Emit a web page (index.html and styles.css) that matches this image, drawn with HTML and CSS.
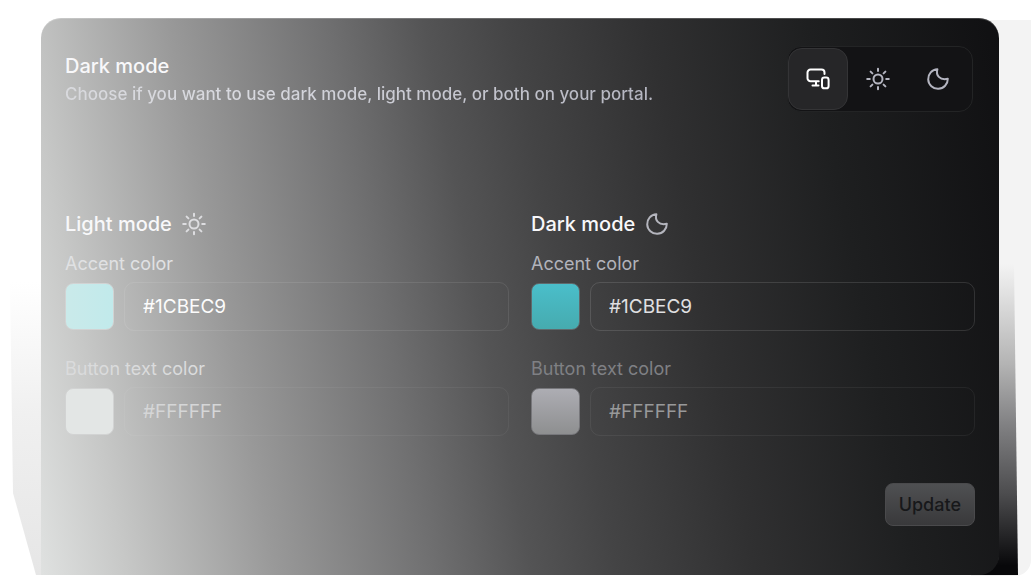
FILE: index.html
```html
<!DOCTYPE html>
<html lang="en">
<head>
    <meta charset="UTF-8">
    <meta name="viewport" content="width=device-width, initial-scale=1.0">
    <title>Portal appearance</title>

    <link rel="stylesheet" href="styles.css">
</head>
<body>

<svg class="sprite" aria-hidden="true">
    <symbol id="icon-sun" viewBox="0 0 24 24">
        <circle cx="12" cy="12" r="4.5"/>
        <path d="M12 1.7v2.2M12 20.1v2.2M1.2 12h2.6M20.2 12h2.6M4.6 4.6l1.8 1.8M17.6 17.6l1.8 1.8M4.6 19.4l1.8-1.8M17.6 6.4l1.8-1.8"/>
    </symbol>
    <symbol id="icon-moon" viewBox="0 0 24 24">
        <path d="M11.4 2.2C9.6 8 13.6 13.6 21.8 11.8A9.8 9.8 0 1 1 11.4 2.2z"/>
    </symbol>
    <symbol id="icon-devices" viewBox="0 0 24 24">
        <path d="M18.5 7V5.6a3 3 0 0 0-3-3h-11a3 3 0 0 0-3 3v5.6a3 3 0 0 0 3 3h8.2M10 14.2v4M6.5 18.4h6"/>
        <rect x="16" y="10.5" width="6.6" height="10.8" rx="2.4"/>
    </symbol>
</svg>

<main class="stage">
    <form class="card">
        <header class="card-header">
            <div class="intro">
                <h1 class="title">Dark mode</h1>
                <p class="description">Choose if you want to use dark mode, light mode, or both on your portal.</p>
            </div>
            <div class="switch" role="group" aria-label="Portal mode">
                <button type="button" class="switch-btn active" aria-label="Both" aria-pressed="true">
                    <svg class="icon"><use href="#icon-devices"/></svg>
                </button>
                <button type="button" class="switch-btn" aria-label="Light" aria-pressed="false">
                    <svg class="icon"><use href="#icon-sun"/></svg>
                </button>
                <button type="button" class="switch-btn" aria-label="Dark" aria-pressed="false">
                    <svg class="icon"><use href="#icon-moon"/></svg>
                </button>
            </div>
        </header>

        <div class="modes">
            <section class="mode light">
                <h2 class="title">Light mode <svg class="icon"><use href="#icon-sun"/></svg></h2>
                <div class="field">
                    <label for="lightAccent">Accent color</label>
                    <div class="color-row">
                        <input type="color" class="swatch accent" value="#1cbec9" aria-label="Pick light accent color">
                        <input type="text" class="hex" id="lightAccent" value="#1CBEC9">
                    </div>
                </div>
                <div class="field faded">
                    <label for="lightText">Button text color</label>
                    <div class="color-row">
                        <input type="color" class="swatch" value="#ffffff" aria-label="Pick light button text color">
                        <input type="text" class="hex" id="lightText" value="#FFFFFF">
                    </div>
                </div>
            </section>

            <section class="mode dark">
                <h2 class="title">Dark mode <svg class="icon"><use href="#icon-moon"/></svg></h2>
                <div class="field">
                    <label for="darkAccent">Accent color</label>
                    <div class="color-row">
                        <input type="color" class="swatch accent" value="#1cbec9" aria-label="Pick dark accent color">
                        <input type="text" class="hex" id="darkAccent" value="#1CBEC9">
                    </div>
                </div>
                <div class="field faded">
                    <label for="darkText">Button text color</label>
                    <div class="color-row">
                        <input type="color" class="swatch" value="#ffffff" aria-label="Pick dark button text color">
                        <input type="text" class="hex" id="darkText" value="#FFFFFF">
                    </div>
                </div>
            </section>
        </div>

        <footer class="card-footer">
            <button type="submit" class="update">Update</button>
        </footer>
    </form>
</main>

</body>
</html>
```

FILE: styles.css
```css
* {
    box-sizing: border-box;
}

body {
    margin: 0;
    background-color: #ffffff;
    font-family: Inter, "Liberation Sans", sans-serif;
}

.sprite {
    display: none;
}

.icon {
    width: 24px;
    height: 24px;
    fill: none;
    stroke: currentColor;
    stroke-width: 2;
    stroke-linecap: round;
    stroke-linejoin: round;
}

.stage {
    position: relative;
    isolation: isolate;
    min-height: 100vh;
    padding: 18px 32px 1px 41px;
    display: flex;
}

/* grey panel behind the right edge */
.stage::before {
    content: "";
    position: absolute;
    z-index: -2;
    top: 20px;
    right: 0;
    bottom: 0;
    width: 60px;
    background-color: #f3f3f3;
    border-bottom-right-radius: 16px;
}

.card {
    position: relative;
    flex: 1;
    padding: 28px 24px 49px;
    border-radius: 20px 20px 20px 0;
    color: #f8f8fa;
    background: linear-gradient(79deg, #dfe1e0 0%, #c7c8c7 8%, #999999 22%, #6f6f70 37%, #545455 46%, #444445 54%, #303031 67%, #1e1f20 82%, #101012 100%);
    box-shadow: inset 0 1px rgba(255, 255, 255, 0.2);
}

/* slanted shadows on both sides */
.card::before,
.card::after {
    content: "";
    position: absolute;
    z-index: -1;
    bottom: 0;
}

.card::before {
    top: 264px;
    left: -31px;
    width: 60px;
    background: linear-gradient(#ffffff, #f0f0f0 45%, #e6e6e6);
    clip-path: polygon(0 0, 100% 0, 100% 100%, 26px 100%, 3px 72%);
}

.card::after {
    top: 246px;
    right: -19px;
    width: 60px;
    background: linear-gradient(#f3f3f3, #dcdcdc 12%, #b4b4b4 32%, #808082 52%, #4c4c4e 74%, #08080a 97%);
    clip-path: polygon(0 0, 56px 0, 100% 100%, 0 100%);
}

.card-header {
    display: flex;
    justify-content: space-between;
    align-items: center;
    padding-right: 2px;
}

.intro {
    padding-top: 2px;
}

.title {
    margin: 0;
    display: flex;
    align-items: center;
    gap: 10px;
    font-size: 20px;
    line-height: 28px;
    font-weight: 450;
}

.title .icon {
    color: #b4b5bd;
}

.light .title .icon {
    color: #dddde0;
}

.description {
    margin: 0;
    font-size: 17px;
    line-height: 28px;
    font-weight: 500;
    background: linear-gradient(90deg, #d8d9dd, #d8d9df 30%, #b4b5c0);
    background-clip: text;
    -webkit-background-clip: text;
    color: transparent;
}

.switch {
    display: flex;
    padding: 1px 4px 1px 0;
    border: 1px solid #232425;
    border-radius: 14px;
    background-color: #131315;
}

.switch-btn {
    width: 60px;
    height: 62px;
    padding: 0;
    display: flex;
    align-items: center;
    justify-content: center;
    border: 1px solid transparent;
    border-radius: 14px;
    background: none;
    color: #b4b5c0;
    cursor: pointer;
}

.switch-btn.active {
    background-color: #262628;
    border-color: #343436;
    color: #ffffff;
}

.modes {
    margin-top: 98px;
    display: grid;
    grid-template-columns: 1fr 1fr;
    gap: 22px;
}

.field {
    margin-top: 14px;
}

.field.faded {
    margin-top: 26px;
}

.field label {
    display: block;
    margin-bottom: 6px;
    font-size: 18px;
    line-height: 24px;
    color: #b2b3bb;
}

.color-row {
    display: flex;
    align-items: center;
    gap: 10px;
}

.swatch {
    appearance: none;
    flex: none;
    width: 49px;
    height: 47px;
    padding: 0;
    border: 1px solid #77777b;
    border-radius: 8px;
    background: linear-gradient(#adadb3, #8e8f90);
    cursor: pointer;
}

.swatch::-webkit-color-swatch-wrapper {
    display: none;
}

.swatch.accent {
    border-color: #5f6a6d;
    background: linear-gradient(#4abeca, #46abaf);
}

.hex {
    flex: 1;
    min-width: 0;
    height: 49px;
    padding: 0 18px;
    border: 1px solid rgba(255, 255, 255, 0.12);
    border-radius: 10px;
    background: none;
    color: #e0e0e2;
    font-family: inherit;
    font-size: 19px;
}

.faded label {
    color: #7f8084;
}

.faded .hex {
    border-color: rgba(255, 255, 255, 0.06);
    color: #98999a;
}

/* light column */
.light label {
    color: #e0e1e3;
}

.light .swatch {
    border-color: #d2d3d3;
    background: #e3e6e5;
}

.light .swatch.accent {
    background: linear-gradient(90deg, #caeaea, #c1eaeb);
}

.light .hex {
    border-color: rgba(255, 255, 255, 0.09);
    color: #fcfcfc;
}

.light .faded label {
    color: #dadbdc;
}

.light .faded .hex {
    border-color: rgba(255, 255, 255, 0.05);
    color: #d5d6d7;
}

.card-footer {
    margin-top: 47px;
    display: flex;
    justify-content: flex-end;
}

.update {
    height: 43px;
    padding: 0 13px;
    border: 1px solid #4a4a4c;
    border-radius: 8px;
    background: linear-gradient(#4f5052, #39393b);
    color: #17181a;
    font-family: inherit;
    font-size: 18px;
    font-weight: 500;
    cursor: pointer;
}
```
